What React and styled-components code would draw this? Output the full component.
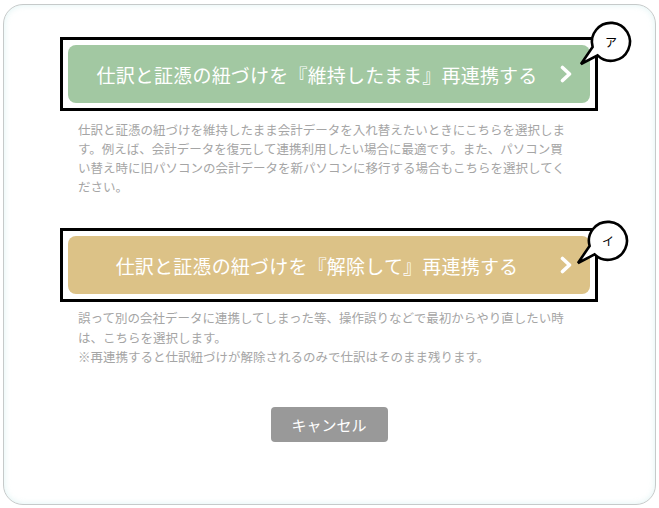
import styled, { createGlobalStyle } from "styled-components";

const GlobalStyle = createGlobalStyle`
  html, body {
    margin: 0;
    padding: 0;
    background: #ffffff;
  }
  body {
    font-family: "Noto Sans CJK JP", "Noto Sans", sans-serif;
  }
`;

const Page = styled.div`
  width: 659px;
  height: 508px;
  padding: 4px 0 0 3px;
  box-sizing: border-box;
`;

const Modal = styled.div`
  width: 653px;
  height: 501px;
  box-sizing: border-box;
  border: 1px solid #c6caca;
  border-radius: 20px;
  background: #ffffff;
  box-shadow: inset 0 0 6px rgba(200, 235, 235, 0.6);
  padding: 32px 57px 0 56px;
  display: flex;
  flex-direction: column;
`;

const Frame = styled.div`
  position: relative;
  border: 3px solid #000;
  padding: 5px;
  background: #fff;
`;

const OptionButton = styled.button`
  width: 100%;
  height: 58px;
  border: none;
  border-radius: 8px;
  background: ${(p) => p.$color};
  color: #fff;
  display: flex;
  align-items: center;
  padding: 0 12px 0 12px;
  cursor: pointer;
  font-family: "Noto Sans CJK JP", sans-serif;
`;

const ButtonLabel = styled.span`
  flex: 1;
  text-align: center;
  font-size: 19px;
  letter-spacing: 0.2px;
  padding-top: 1px;
`;

const Chevron = styled.svg`
  width: 24px;
  height: 18px;
  flex: none;
`;

const Callout = styled.svg`
  position: absolute;
  left: ${(p) => p.$left}px;
  top: ${(p) => p.$top}px;
  width: 60px;
  height: 52px;
  overflow: visible;
`;

const Desc = styled.p`
  margin: ${(p) => p.$top}px 0 0 18px;
  font-size: 12.5px;
  line-height: ${(p) => p.$lh}px;
  color: #a5a5a5;
  white-space: nowrap;
`;

const CancelButton = styled.button`
  align-self: center;
  margin-top: 40px;
  width: 117px;
  height: 35px;
  border: none;
  border-radius: 4px;
  background: #999999;
  color: #fff;
  font-size: 15px;
  font-family: "Noto Sans CJK JP", sans-serif;
  cursor: pointer;
`;

const Bubble = ({ label, left, top }) => (
  <Callout $left={left} $top={top} viewBox="0 0 60 52">
    <path
      d="M14.6 28.9 A19 19 0 1 1 19.6 37.4 L3 46 Z"
      fill="#fff"
      stroke="#000"
      strokeWidth="2.6"
      strokeLinejoin="miter"
    />
    <text
      x="33"
      y="28.5"
      textAnchor="middle"
      fontSize="12"
      fontFamily="Noto Sans CJK JP, sans-serif"
      fill="#000"
    >
      {label}
    </text>
  </Callout>
);

const Arrow = () => (
  <Chevron viewBox="0 0 24 18">
    <polyline
      points="8.5,2.5 15.5,9 8.5,15.5"
      fill="none"
      stroke="#fff"
      strokeWidth="3.6"
      strokeLinecap="round"
      strokeLinejoin="round"
    />
  </Chevron>
);

const App = () => {
  return (
    <Page>
      <GlobalStyle />
      <Modal>
        <Frame>
          <OptionButton $color="#a2c8a2">
            <ButtonLabel>仕訳と証憑の紐づけを『維持したまま』再連携する</ButtonLabel>
            <Arrow />
          </OptionButton>
          <Bubble label="ア" left={515} top={-22} />
        </Frame>
        <Desc $top={9} $lh={19}>
          仕訳と証憑の紐づけを維持したまま会計データを入れ替えたいときにこちらを選択しま
          <br />
          す。例えば、会計データを復元して連携利用したい場合に最適です。また、パソコン買
          <br />
          い替え時に旧パソコンの会計データを新パソコンに移行する場合もこちらを選択してく
          <br />
          ださい。
        </Desc>

        <Frame style={{ marginTop: 32 }}>
          <OptionButton $color="#dcc287">
            <ButtonLabel>仕訳と証憑の紐づけを『解除して』再連携する</ButtonLabel>
            <Arrow />
          </OptionButton>
          <Bubble label="イ" left={512} top={-14} />
        </Frame>
        <Desc $top={6} $lh={19.5}>
          誤って別の会社データに連携してしまった等、操作誤りなどで最初からやり直したい時
          <br />
          は、こちらを選択します。
          <br />
          ※再連携すると仕訳紐づけが解除されるのみで仕訳はそのまま残ります。
        </Desc>

        <CancelButton>キャンセル</CancelButton>
      </Modal>
    </Page>
  );
};

export default App;
